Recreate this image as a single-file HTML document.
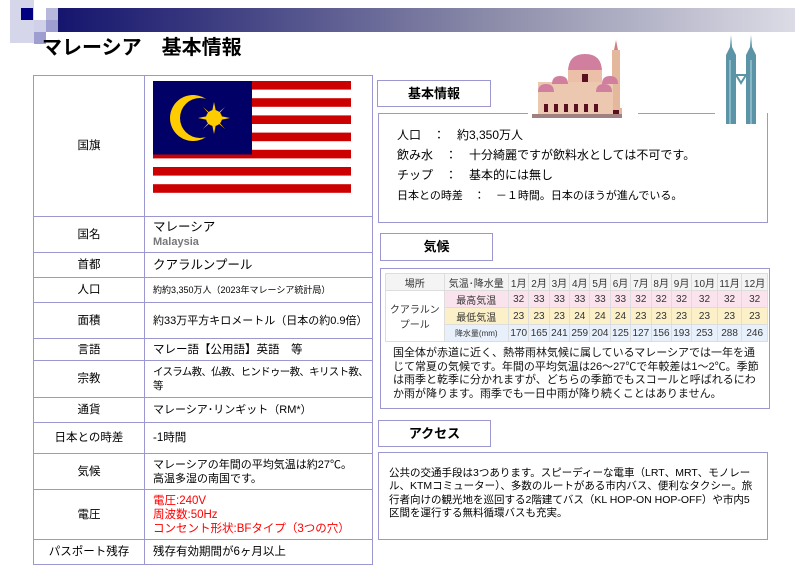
<!DOCTYPE html>
<html><head><meta charset="utf-8"><style>
body{margin:0;width:795px;height:573px;position:relative;background:#fff;font-family:"Liberation Sans","Noto Sans CJK JP",sans-serif;color:#000;overflow:hidden}
.a{position:absolute}
.bx{position:absolute;border:1px solid #9b97d0;background:#fff;box-sizing:border-box}
table.t{position:absolute;left:33px;top:75px;border-collapse:collapse;font-size:11.5px;table-layout:fixed}
table.t td{border:1px solid #9b97d0;padding:0 0 0 8px;line-height:14px}
table.t td.l{text-align:center;padding:0;width:110px}
.lab{font-weight:bold;font-size:13px;text-align:center;line-height:25px}
.ct{border-collapse:collapse;font-size:10px;font-family:"Liberation Sans Narrow","Liberation Sans","Noto Sans CJK JP",sans-serif;color:#333}
.ct td{border:1px solid #ddd;text-align:center;height:16px;padding:0}
</style></head><body>
<div class="a" style="left:58px;top:8px;width:737px;height:24px;background:linear-gradient(90deg,#15156e,#3a3a80 20%,#8e8eab 60%,#dcdce6 100%)"></div>
<div class="a" style="left:10px;top:0;width:24px;height:43px;background:#d6d6ea"></div>
<div class="a" style="left:21px;top:8px;width:12px;height:12px;background:#000080"></div>
<div class="a" style="left:34px;top:20px;width:12px;height:12px;background:#d0d0e8"></div>
<div class="a" style="left:46px;top:8px;width:12px;height:12px;background:#b8b8dc"></div>
<div class="a" style="left:46px;top:20px;width:12px;height:12px;background:#9e9ed0"></div>
<div class="a" style="left:34px;top:32px;width:12px;height:12px;background:#9e9ed0"></div>
<div class="a" style="left:42px;top:35px;font-size:20px;font-weight:bold;line-height:26px">マレーシア　基本情報</div>

<table class="t">
<tr style="height:141px"><td class="l">国旗</td><td style="width:219px;vertical-align:top;padding-top:5px">
<svg width="198" height="120" viewBox="0 0 198 120" style="display:block;margin-left:0"><g fill="#cc0000"><rect y="0" width="198" height="8.6"/><rect y="17.2" width="198" height="8.6"/><rect y="34.4" width="198" height="8.6"/><rect y="51.6" width="198" height="8.6"/><rect y="68.8" width="198" height="8.6"/><rect y="86" width="198" height="8.6"/><rect y="103.2" width="198" height="8.6"/></g><rect width="99" height="73.5" fill="#010066"/><circle cx="40" cy="37" r="23" fill="#fc0"/><circle cx="47" cy="37" r="20" fill="#010066"/><g fill="#fc0" transform="translate(61,37)"><circle r="8"/><path d="M0-16L2-6 0 0-2-6Z M0 16L2 6 0 0-2 6Z M-16 0L-6 2 0 0-6-2Z M16 0L6 2 0 0 6-2Z M11-11L4-3 0 0 3-4Z M-11 11L-4 3 0 0-3 4Z M11 11L3 4 0 0 4 3Z M-11-11L-3-4 0 0-4-3Z"/></g></svg></td></tr>
<tr style="height:36px"><td class="l">国名</td><td style="font-size:12.5px">マレーシア<br><b style="color:#777;font-size:11px">Malaysia</b></td></tr>
<tr style="height:25px"><td class="l">首都</td><td style="font-size:12.5px">クアラルンプール</td></tr>
<tr style="height:25px"><td class="l">人口</td><td style="font-size:9px">約約3,350万人（2023年マレーシア統計局）</td></tr>
<tr style="height:36px"><td class="l">面積</td><td style="white-space:nowrap;font-size:11px">約33万平方キロメートル（日本の約0.9倍）</td></tr>
<tr style="height:22px"><td class="l">言語</td><td>マレー語【公用語】英語　等</td></tr>
<tr style="height:37px"><td class="l">宗教</td><td style="font-size:10.5px"><span style="white-space:nowrap;letter-spacing:-0.7px">イスラム教、仏教、ヒンドゥー教、キリスト教、</span><br>等</td></tr>
<tr style="height:25px"><td class="l">通貨</td><td style="font-size:11px">マレーシア･リンギット（RM*）</td></tr>
<tr style="height:31px"><td class="l">日本との時差</td><td>-1時間</td></tr>
<tr style="height:36px"><td class="l">気候</td><td style="font-size:11px">マレーシアの年間の平均気温は約27℃。<br>高温多湿の南国です。</td></tr>
<tr style="height:50px"><td class="l">電圧</td><td style="color:#f00">電圧:240V<br>周波数:50Hz<br>コンセント形状:BFタイプ（3つの穴）</td></tr>
<tr style="height:25px"><td class="l">パスポート残存</td><td>残存有効期間が6ヶ月以上</td></tr>
</table>

<div class="bx" style="left:378px;top:113px;width:390px;height:110px"></div>
<div class="bx lab" style="left:377px;top:80px;width:114px;height:27px">基本情報</div>
<div class="a" style="left:528px;top:40px;width:110px;height:78px;background:#fff"></div>
<svg class="a" style="left:530px;top:40px" width="104" height="78" viewBox="0 0 104 78"><rect x="82" y="10" width="8" height="68" fill="#e4b89c"/><path d="M84 10L86 0 88 10Z" fill="#d08080"/><rect x="80" y="68" width="12" height="10" fill="#e4b89c"/><rect x="83" y="70" width="6" height="8" fill="#5a1020"/><path d="M38 32Q38 14 55 14Q72 14 72 32Z" fill="#d07f9f"/><rect x="38" y="30" width="34" height="14" fill="#ecc0a8"/><rect x="8" y="42" width="75" height="36" fill="#ecc8b0"/><path d="M8 52Q8 44 16 44Q24 44 24 52Z M66 52Q66 44 74 44Q82 44 82 52Z M22 44Q22 36 30 36Q38 36 38 44Z M72 44Q72 36 80 36Q88 36 88 44Z" fill="#d07f9f"/><g fill="#5a1020"><rect x="14" y="64" width="4" height="8"/><rect x="24" y="64" width="4" height="8"/><rect x="34" y="64" width="4" height="8"/><rect x="44" y="64" width="4" height="8"/><rect x="54" y="64" width="4" height="8"/><rect x="64" y="64" width="4" height="8"/><rect x="52" y="34" width="6" height="8"/></g><rect x="2" y="74" width="90" height="4" fill="#a08080"/></svg>
<div class="a" style="left:715px;top:35px;width:52px;height:89px;background:#fff"></div>
<svg class="a" style="left:718px;top:35px" width="46" height="89" viewBox="0 0 46 89"><path d="M8 89V20L12 12 13 0 14 12 18 20V89Z M28 89V20L32 12 33 0 34 12 38 20V89Z" fill="#5a94a6"/><path d="M18 40H28L23 48Z" fill="none" stroke="#5a94a6" stroke-width="2"/><path d="M12 25V89M33 25V89" stroke="#8ab8c6" stroke-width="2"/></svg>
<div class="a" style="left:397px;top:125px;font-size:12px;line-height:20px">人口　：　約3,350万人<br>飲み水　：　十分綺麗ですが飲料水としては不可です。<br>チップ　：　基本的には無し<br><span style="font-size:11px">日本との時差　：　－１時間。日本のほうが進んでいる。</span></div>

<div class="bx lab" style="left:380px;top:233px;width:113px;height:28px">気候</div>
<div class="bx" style="left:380px;top:268px;width:390px;height:141px"></div>
<table class="ct a" style="left:385px;top:273px;width:383px">
<tr style="background:#f4f4f4"><td>場所</td><td>気温･降水量</td><td>1月</td><td>2月</td><td>3月</td><td>4月</td><td>5月</td><td>6月</td><td>7月</td><td>8月</td><td>9月</td><td>10月</td><td>11月</td><td>12月</td></tr>
<tr style="background:#fbe3ee"><td rowspan="3" style="background:#fff">クアラルン<br>プール</td><td>最高気温</td><td>32</td><td>33</td><td>33</td><td>33</td><td>33</td><td>33</td><td>32</td><td>32</td><td>32</td><td>32</td><td>32</td><td>32</td></tr>
<tr style="background:#fbf0c8"><td>最低気温</td><td>23</td><td>23</td><td>23</td><td>24</td><td>24</td><td>24</td><td>23</td><td>23</td><td>23</td><td>23</td><td>23</td><td>23</td></tr>
<tr style="background:#e8f0fb"><td style="font-size:8px">降水量(mm)</td><td>170</td><td>165</td><td>241</td><td>259</td><td>204</td><td>125</td><td>127</td><td>156</td><td>193</td><td>253</td><td>288</td><td>246</td></tr>
</table>
<div class="a" style="left:393px;top:347px;width:370px;font-size:11px;line-height:13.5px;color:#111">国全体が赤道に近く、熱帯雨林気候に属しているマレーシアでは一年を通じて常夏の気候です。年間の平均気温は26～27℃で年較差は1～2℃。季節は雨季と乾季に分かれますが、どちらの季節でもスコールと呼ばれるにわか雨が降ります。雨季でも一日中雨が降り続くことはありません。</div>

<div class="bx lab" style="left:378px;top:420px;width:113px;height:27px">アクセス</div>
<div class="bx" style="left:378px;top:452px;width:390px;height:88px"></div>
<div class="a" style="left:389px;top:467px;width:364px;font-size:10.5px;line-height:13.3px">公共の交通手段は3つあります。スピーディーな電車（LRT、MRT、モノレール、KTMコミューター）、多数のルートがある市内バス、便利なタクシー。旅行者向けの観光地を巡回する2階建てバス（KL HOP-ON HOP-OFF）や市内5区間を運行する無料循環バスも充実。</div>
</body></html>
